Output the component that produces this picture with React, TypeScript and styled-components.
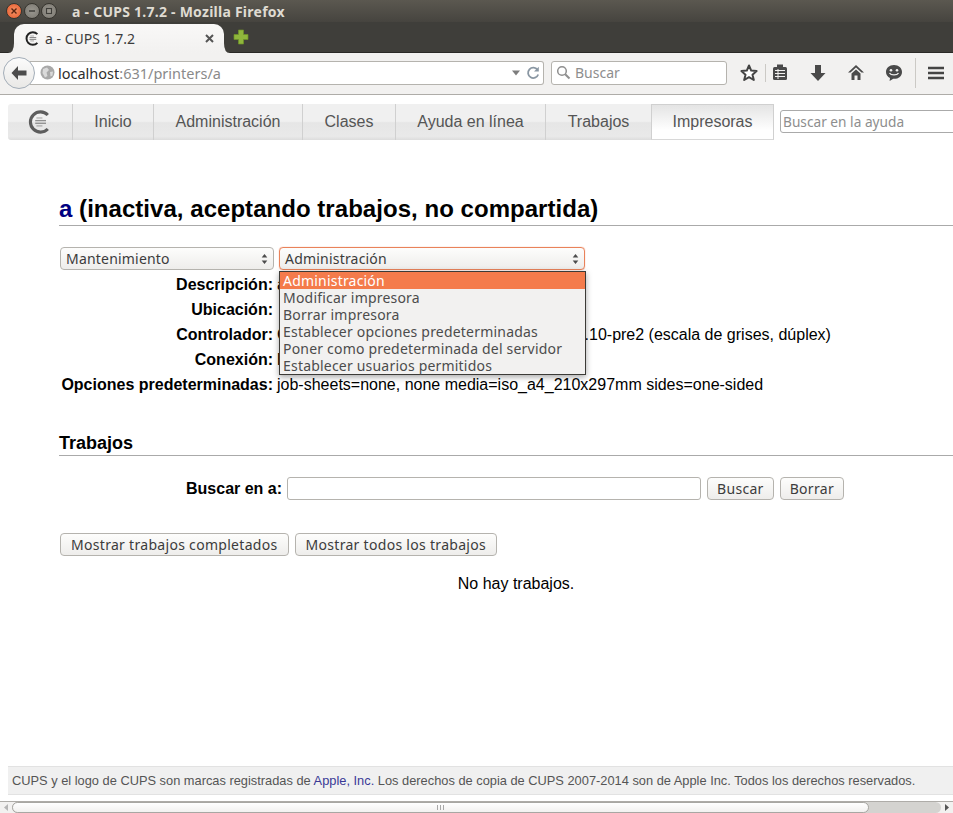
import React from 'react';
import styled, { createGlobalStyle } from 'styled-components';

const UI_FONT = `"Noto Sans", "Open Sans", sans-serif`;
const PAGE_FONT = `"Liberation Sans", Arial, sans-serif`;

const GlobalStyle = createGlobalStyle`
    html, body {
        margin: 0;
        padding: 0;
        height: 100%;
        overflow: hidden;
        background: #fff;
    }
    * {
        box-sizing: border-box;
    }
`;

const Logo: React.FC<{ size: number; color: string }> = ({ size, color }) => (
    <svg width={size} height={size} viewBox="0 0 20 20">
        <path d="M16.5 4.2A8.4 8.4 0 1 0 16.5 15.8" fill="none" stroke={color} strokeWidth="2.6" />
        <rect x="7" y="6.2" width="5" height="0.9" fill={color} opacity="0.5" />
        <rect x="6" y="8.3" width="9" height="1.1" fill={color} opacity="0.65" />
        <rect x="6" y="10.5" width="9" height="1.1" fill={color} opacity="0.65" />
        <rect x="7" y="12.8" width="5" height="0.9" fill={color} opacity="0.5" />
    </svg>
);

const App: React.FC = () => {
    return (
        <Window>
            <GlobalStyle />
            <TitleBar>
                <WindowButtons>
                    <WindowButton $close>
                        <svg width="8" height="8" viewBox="0 0 8 8">
                            <path d="M1.5 1.5L6.5 6.5M6.5 1.5L1.5 6.5" stroke="#5b2410" strokeWidth="1.4" />
                        </svg>
                    </WindowButton>
                    <WindowButton>
                        <svg width="8" height="8" viewBox="0 0 8 8">
                            <path d="M1 4H7" stroke="#3f3e3a" strokeWidth="1.5" />
                        </svg>
                    </WindowButton>
                    <WindowButton>
                        <svg width="8" height="8" viewBox="0 0 8 8">
                            <rect x="1.5" y="1.5" width="5" height="5" fill="none" stroke="#3f3e3a" strokeWidth="1.1" />
                        </svg>
                    </WindowButton>
                </WindowButtons>
                <WindowTitle>a - CUPS 1.7.2 - Mozilla Firefox</WindowTitle>
            </TitleBar>
            <TabStrip>
                <Tab>
                    <Logo size={15} color="#222" />
                    <TabLabel>a - CUPS 1.7.2</TabLabel>
                    <svg width="9" height="9" viewBox="0 0 9 9">
                        <path d="M1 1L8 8M8 1L1 8" stroke="#555" strokeWidth="2" />
                    </svg>
                </Tab>
                <NewTab>
                    <svg width="16" height="16" viewBox="0 0 16 16">
                        <path d="M5.5 1H10.5V5.5H15V10.5H10.5V15H5.5V10.5H1V5.5H5.5Z" fill="#8fb63c" stroke="#6f9426" strokeWidth="0.7" />
                    </svg>
                </NewTab>
            </TabStrip>
            <NavBar>
                <BackButton>
                    <svg width="18" height="16" viewBox="0 0 18 16">
                        <path d="M8 1L1.5 8L8 15V10.5H16.5V5.5H8Z" fill="#4c4c4c" />
                    </svg>
                </BackButton>
                <UrlBar>
                    <svg width="15" height="15" viewBox="0 0 15 15">
                        <circle cx="7.5" cy="7.5" r="7" fill="#a9a9a9" />
                        <path d="M3 4L7 2.5L9 5L6.5 7.5L7.5 11L5 12.5L2.5 8Z" fill="#dadada" />
                        <path d="M10 7L13 6.5L12.5 10.5L10.5 11.5Z" fill="#dadada" />
                    </svg>
                    <UrlText>
                        localhost<UrlRest>:631/printers/a</UrlRest>
                    </UrlText>
                    <svg width="10" height="6" viewBox="0 0 10 6">
                        <path d="M1 0.5H9L5 5.5Z" fill="#7d7d7d" />
                    </svg>
                    <svg width="14" height="14" viewBox="0 0 14 14">
                        <path d="M11.5 3.8A5.2 5.2 0 1 0 12.2 8.5" fill="none" stroke="#8a97a3" strokeWidth="1.8" />
                        <path d="M12.8 0.8V5.6H8Z" fill="#8a97a3" />
                    </svg>
                </UrlBar>
                <BrowserSearch>
                    <svg width="15" height="15" viewBox="0 0 15 15">
                        <circle cx="6" cy="6" r="4.3" fill="none" stroke="#8f8f8f" strokeWidth="1.5" />
                        <path d="M9.2 9.2L13.5 13.5" stroke="#8f8f8f" strokeWidth="2" />
                    </svg>
                    <span>Buscar</span>
                </BrowserSearch>
                <ToolIcon $left={10}>
                    <svg width="18" height="18" viewBox="0 0 18 18">
                        <path d="M9 1.5L11.2 6.6L16.6 7.1L12.5 10.7L13.8 16L9 13.2L4.2 16L5.5 10.7L1.4 7.1L6.8 6.6Z" fill="#fff" stroke="#444" strokeWidth="2" strokeLinejoin="round" />
                    </svg>
                </ToolIcon>
                <ToolDivider $left={4} />
                <ToolIcon $left={2}>
                    <svg width="16" height="17" viewBox="0 0 16 17">
                        <rect x="1" y="3" width="14" height="13" rx="1.5" fill="#4a4a4a" />
                        <rect x="5" y="0.5" width="6" height="3.5" fill="#4a4a4a" />
                        <path d="M3 6.5H13M3 9.5H13M3 12.5H13M6 5V15" stroke="#f2f1f0" strokeWidth="1" />
                    </svg>
                </ToolIcon>
                <ToolIcon $left={14}>
                    <svg width="16" height="18" viewBox="0 0 16 18">
                        <path d="M5 1H11V9H15.5L8 17L0.5 9H5Z" fill="#4a4a4a" />
                    </svg>
                </ToolIcon>
                <ToolIcon $left={14}>
                    <svg width="18" height="17" viewBox="0 0 18 17">
                        <path d="M9 1L1 8.5H3.5L9 3.6L14.5 8.5H17Z" fill="#4a4a4a" />
                        <path d="M4.5 9.5L9 5.5L13.5 9.5V16H10.5V11.5H7.5V16H4.5Z" fill="#4a4a4a" />
                    </svg>
                </ToolIcon>
                <ToolIcon $left={14}>
                    <svg width="18" height="18" viewBox="0 0 18 18">
                        <path d="M9 1C4.3 1 1 3.9 1 7.9C1 10.6 2.6 12.8 5 13.9L4.6 17L8.3 14.7C8.5 14.7 8.8 14.8 9 14.8C13.7 14.8 17 11.9 17 7.9C17 3.9 13.7 1 9 1Z" fill="#4a4a4a" />
                        <circle cx="6" cy="6.2" r="1.3" fill="#f2f1f0" />
                        <circle cx="12" cy="6.2" r="1.3" fill="#f2f1f0" />
                        <path d="M4.5 9C6 11.6 12 11.6 13.5 9" fill="none" stroke="#f2f1f0" strokeWidth="1.3" />
                    </svg>
                </ToolIcon>
                <ToolDivider $left={9} $tall />
                <ToolIcon $left={8}>
                    <svg width="16" height="14" viewBox="0 0 16 14">
                        <path d="M0 2H16M0 7H16M0 12H16" stroke="#444" strokeWidth="2.4" />
                    </svg>
                </ToolIcon>
            </NavBar>
            <Page>
                <PageInner>
                    <CupsNav>
                        <NavLogo>
                            <Logo size={24} color="#5d5d5d" />
                        </NavLogo>
                        <NavItem $width={81}>Inicio</NavItem>
                        <NavItem $width={149}>Administración</NavItem>
                        <NavItem $width={93}>Clases</NavItem>
                        <NavItem $width={150}>Ayuda en línea</NavItem>
                        <NavItem $width={106}>Trabajos</NavItem>
                        <NavItem $width={123} $active>
                            Impresoras
                        </NavItem>
                        <HelpSearch>Buscar en la ayuda</HelpSearch>
                    </CupsNav>
                    <Content>
                        <Title>
                            <TitleLink>a</TitleLink> (inactiva, aceptando trabajos, no compartida)
                        </Title>
                        <SelectRow>
                            <SelectBox $width={214}>
                                Mantenimiento
                                <SelectArrows />
                            </SelectBox>
                            <SelectWrap>
                                <SelectBox $width={306} $focused>
                                    Administración
                                    <SelectArrows />
                                </SelectBox>
                                <Menu>
                                    <MenuItem $selected>Administración</MenuItem>
                                    <MenuItem>Modificar impresora</MenuItem>
                                    <MenuItem>Borrar impresora</MenuItem>
                                    <MenuItem>Establecer opciones predeterminadas</MenuItem>
                                    <MenuItem>Poner como predeterminada del servidor</MenuItem>
                                    <MenuItem>Establecer usuarios permitidos</MenuItem>
                                </Menu>
                            </SelectWrap>
                        </SelectRow>
                        <InfoTable>
                            <InfoLabel>Descripción:</InfoLabel>
                            <InfoValue>a</InfoValue>
                            <InfoLabel>Ubicación:</InfoLabel>
                            <InfoValue />
                            <InfoLabel>Controlador:</InfoLabel>
                            <InfoValue>Generic PCL Laser: CUPS+Gutenprint v5.2.10-pre2 (escala de grises, dúplex)</InfoValue>
                            <InfoLabel>Conexión:</InfoLabel>
                            <InfoValue>hp:/usb/a</InfoValue>
                            <InfoLabel>Opciones predeterminadas:</InfoLabel>
                            <InfoValue>job-sheets=none, none media=iso_a4_210x297mm sides=one-sided</InfoValue>
                        </InfoTable>
                        <SectionTitle>Trabajos</SectionTitle>
                        <SearchForm>
                            <SearchLabel>Buscar en a:</SearchLabel>
                            <SearchInput />
                            <FormButton $pad={9}>Buscar</FormButton>
                            <FormButton $pad={9}>Borrar</FormButton>
                        </SearchForm>
                        <ButtonRow>
                            <FormButton>Mostrar trabajos completados</FormButton>
                            <FormButton>Mostrar todos los trabajos</FormButton>
                        </ButtonRow>
                        <EmptyNote>No hay trabajos.</EmptyNote>
                    </Content>
                    <Footer>
                        CUPS y el logo de CUPS son marcas registradas de <FooterLink>Apple, Inc.</FooterLink> Los derechos de copia de CUPS 2007-2014 son de Apple Inc. Todos los derechos reservados.
                    </Footer>
                </PageInner>
            </Page>
            <ScrollBar>
                <ScrollArrow>
                    <svg width="4" height="7" viewBox="0 0 4 7">
                        <path d="M4 0V7L0 3.5Z" fill="#b5b5b5" />
                    </svg>
                </ScrollArrow>
                <ScrollTrack>
                    <ScrollThumb>
                        <svg width="7" height="5" viewBox="0 0 7 5">
                            <path d="M0.5 0V5M3.5 0V5M6.5 0V5" stroke="#a8a8a8" strokeWidth="1" />
                        </svg>
                    </ScrollThumb>
                </ScrollTrack>
                <ScrollArrow>
                    <svg width="4" height="7" viewBox="0 0 4 7">
                        <path d="M0 0V7L4 3.5Z" fill="#555" />
                    </svg>
                </ScrollArrow>
            </ScrollBar>
        </Window>
    );
};

export default App;

const Window = styled.div`
    width: 953px;
    height: 813px;
    display: flex;
    flex-direction: column;
    overflow: hidden;
    background: #fff;
`;

const TitleBar = styled.div`
    height: 22px;
    flex: none;
    display: flex;
    align-items: center;
    padding-left: 6px;
    background: linear-gradient(#5b5850, #46443f);
`;

const WindowButtons = styled.div`
    display: flex;
    gap: 1.5px;
    width: 66px;
`;

const WindowButton = styled.div<{ $close?: boolean }>`
    width: 16px;
    height: 16px;
    border-radius: 50%;
    display: flex;
    align-items: center;
    justify-content: center;
    background: ${(p) => (p.$close ? 'radial-gradient(#f59468, #e8592a)' : 'radial-gradient(#9a978f, #7a7770)')};
    border: 1px solid #37352f;
`;

const WindowTitle = styled.div`
    font-family: ${UI_FONT};
    font-size: 14px;
    font-weight: 700;
    letter-spacing: 0.25px;
    color: #dfdbd2;
`;

const TabStrip = styled.div`
    height: 31px;
    flex: none;
    display: flex;
    align-items: flex-end;
    padding-left: 14px;
    background: #3f3e3a;
    border-bottom: 1px solid #2a2926;
`;

const Tab = styled.div`
    width: 210px;
    height: 29px;
    margin-bottom: -1px;
    display: flex;
    align-items: center;
    padding: 0 10px 0 11px;
    background: linear-gradient(#f9f8f7, #f2f1f0);
    border-radius: 10px 10px 0 0;
    position: relative;

    &::before,
    &::after {
        content: '';
        position: absolute;
        bottom: 0;
        width: 10px;
        height: 10px;
        background: #f2f1f0;
    }
    &::before {
        left: -6px;
        clip-path: path('M0 10 Q6 10 6 0 L10 0 L10 10 Z');
    }
    &::after {
        right: -6px;
        clip-path: path('M10 10 Q4 10 4 0 L0 0 L0 10 Z');
    }
`;

const TabLabel = styled.span`
    flex: 1;
    margin-left: 5px;
    font-family: ${UI_FONT};
    font-size: 14px;
    color: #3c3c3c;
`;

const NewTab = styled.div`
    margin: 0 0 7px 9px;
    display: flex;
`;

const NavBar = styled.div`
    height: 42px;
    flex: none;
    display: flex;
    align-items: center;
    padding: 0 0 2px 3px;
    background: #f2f1f0;
    border-bottom: 1px solid #aeaca8;
`;

const BackButton = styled.div`
    width: 32px;
    height: 32px;
    flex: none;
    border-radius: 50%;
    display: flex;
    align-items: center;
    justify-content: center;
    position: relative;
    z-index: 1;
    margin-right: -5px;
    background: linear-gradient(#fbfbfb, #e9e8e6);
    border: 1px solid #a3adb8;
`;

const UrlBar = styled.div`
    width: 514px;
    height: 24px;
    flex: none;
    display: flex;
    align-items: center;
    padding: 0 3px 0 10px;
    gap: 5px;
    background: #fff;
    border: 1px solid #b5b3ae;
    border-left: none;
    border-radius: 0 3px 3px 0;
`;

const UrlText = styled.div`
    flex: 1;
    margin-left: -2px;
    font-family: ${UI_FONT};
    font-size: 14.5px;
    color: #2e2e2e;
    white-space: nowrap;
`;

const UrlRest = styled.span`
    color: #8a8a8a;
`;

const BrowserSearch = styled.div`
    width: 176px;
    height: 24px;
    flex: none;
    margin-left: 7px;
    display: flex;
    align-items: center;
    gap: 4px;
    padding-left: 4px;
    background: #fff;
    border: 1px solid #b5b3ae;
    border-radius: 3px;
    font-family: ${UI_FONT};
    font-size: 14px;
    color: #8e8e8e;
`;

const ToolIcon = styled.div<{ $left: number }>`
    width: 24px;
    height: 24px;
    flex: none;
    margin-left: ${(p) => p.$left}px;
    display: flex;
    align-items: center;
    justify-content: center;
`;

const ToolDivider = styled.div<{ $left: number; $tall?: boolean }>`
    width: 1px;
    height: ${(p) => (p.$tall ? 30 : 18)}px;
    flex: none;
    margin-left: ${(p) => p.$left}px;
    background: #cbc9c5;
`;

const Page = styled.div`
    flex: 1;
    min-height: 0;
    overflow: hidden;
    background: #fff;
`;

const PageInner = styled.div`
    width: 1030px;
    height: 100%;
    display: flex;
    flex-direction: column;
    font-family: ${PAGE_FONT};
    color: #000;
`;

const CupsNav = styled.div`
    display: flex;
    height: 36px;
    margin: 9px 0 0 8px;
    flex: none;
    align-items: stretch;
`;

const navBg = 'linear-gradient(#f0f0f0 0, #f0f0f0 48%, #e6e6e6 52%, #e9e9e9 90%, #dcdcdc 100%)';

const NavLogo = styled.div`
    width: 64px;
    display: flex;
    align-items: center;
    justify-content: center;
    background: ${navBg};
    border-radius: 3px 0 0 3px;
`;

const NavItem = styled.div<{ $width: number; $active?: boolean }>`
    width: ${(p) => p.$width}px;
    display: flex;
    align-items: center;
    justify-content: center;
    font-size: 16px;
    color: #555;
    border-left: 1px solid #d0d0d0;
    background: ${(p) => (p.$active ? 'linear-gradient(#e4e4e4, #fff 75%)' : navBg)};
    ${(p) => p.$active && 'border-right: 1px solid #d0d0d0; border-top: 1px solid #d0d0d0; border-bottom: 1px solid #d8d8d8;'}
`;

const HelpSearch = styled.div`
    width: 190px;
    height: 23px;
    margin: 6px 0 0 6px;
    padding-left: 2px;
    border: 1px solid #aaa;
    border-radius: 3px;
    font-family: ${UI_FONT};
    font-size: 13.7px;
    line-height: 21px;
    color: #8e8e8e;
    white-space: nowrap;
`;

const Content = styled.div`
    flex: 1;
    padding: 55px 57px 0 59px;
`;

const Title = styled.h2`
    margin: 0;
    height: 31px;
    font-size: 24px;
    line-height: 28px;
    font-weight: 700;
    letter-spacing: 0.04px;
    color: #000;
    border-bottom: 1px solid #aaa;
`;

const TitleLink = styled.span`
    color: #000080;
`;

const SelectRow = styled.div`
    display: flex;
    gap: 5px;
    margin: 21px 0 0 1px;
`;

const SelectWrap = styled.div`
    position: relative;
`;

const SelectBox = styled.div<{ $width: number; $focused?: boolean }>`
    width: ${(p) => p.$width}px;
    height: 23px;
    display: flex;
    align-items: center;
    justify-content: space-between;
    padding: 0 5px;
    font-family: ${UI_FONT};
    font-size: 14px;
    letter-spacing: 0.2px;
    color: #3c3c3c;
    border: 1px solid ${(p) => (p.$focused ? '#e9825a' : '#b5b3ae')};
    border-radius: 4px;
    background: linear-gradient(#fdfdfc, #eeedeb);
    ${(p) => p.$focused && 'box-shadow: 0 0 1px #e9825a;'}
`;

const SelectArrows: React.FC = () => (
    <svg width="7" height="12" viewBox="0 0 7 12">
        <path d="M3.5 1L6.3 4.5H0.7Z M3.5 11L0.7 7.5H6.3Z" fill="#4c4c4c" />
    </svg>
);

const Menu = styled.div`
    position: absolute;
    top: 24px;
    left: 0;
    width: 307px;
    background: #f2f1f0;
    border: 1px solid #3c3b37;
    box-shadow: 0 2px 6px rgba(0, 0, 0, 0.35);
    z-index: 2;
`;

const MenuItem = styled.div<{ $selected?: boolean }>`
    height: 17px;
    padding-left: 3px;
    font-family: ${UI_FONT};
    font-size: 14px;
    letter-spacing: 0.2px;
    line-height: 17px;
    white-space: nowrap;
    color: ${(p) => (p.$selected ? '#fff' : '#4c4c4c')};
    background: ${(p) => (p.$selected ? '#f47b4b' : 'transparent')};
`;

const InfoTable = styled.div`
    display: grid;
    grid-template-columns: 214px 1fr;
    grid-auto-rows: 25px;
    column-gap: 4px;
    align-items: center;
    margin-top: 2px;
    font-size: 16px;
`;

const InfoLabel = styled.div`
    text-align: right;
    font-weight: 700;
    white-space: nowrap;
`;

const InfoValue = styled.div`
    white-space: nowrap;
    min-height: 18px;
`;

const SectionTitle = styled.h3`
    margin: 35px 0 0;
    height: 24px;
    font-size: 18px;
    line-height: 22px;
    font-weight: 700;
    border-bottom: 1px solid #aaa;
`;

const SearchForm = styled.div`
    display: flex;
    align-items: center;
    margin: 21px 0 0 127px;
`;

const SearchLabel = styled.div`
    font-size: 16px;
    font-weight: 700;
    margin-right: 5px;
`;

const SearchInput = styled.div`
    width: 414px;
    height: 23px;
    margin-right: 6px;
    background: #fff;
    border: 1px solid #b5b3ae;
    border-radius: 3px;
`;

const FormButton = styled.div<{ $pad?: number }>`
    height: 23px;
    padding: 0 ${(p) => p.$pad ?? 10}px;
    margin-right: 6px;
    flex: none;
    display: flex;
    align-items: center;
    font-family: ${UI_FONT};
    font-size: 14px;
    letter-spacing: 0.3px;
    white-space: nowrap;
    color: #3c3c3c;
    border: 1px solid #b5b3ae;
    border-radius: 4px;
    background: linear-gradient(#fdfdfc, #eeedeb);
`;

const ButtonRow = styled.div`
    display: flex;
    margin: 33px 0 0 1px;
`;

const EmptyNote = styled.p`
    margin: 19px 0 0;
    font-size: 16px;
    text-align: center;
`;

const Footer = styled.div`
    height: 29px;
    flex: none;
    margin: 0 0 6px 8px;
    padding-left: 4px;
    font-size: 12.83px;
    line-height: 28px;
    color: #555;
    background: #f0f0f0;
    white-space: nowrap;
    border-top: 1px solid #e2e2e2;
    border-bottom: 1px solid #e2e2e2;
`;

const FooterLink = styled.span`
    color: #3a3a96;
`;

const ScrollBar = styled.div`
    height: 12px;
    flex: none;
    display: flex;
    align-items: center;
    background: #f2f1f0;
    border-top: 1px solid #aeaca8;
`;

const ScrollArrow = styled.div`
    width: 12px;
    flex: none;
    display: flex;
    justify-content: center;
`;

const ScrollTrack = styled.div`
    flex: 1;
    height: 11px;
    background: #d4d3d0;
    border-radius: 6px;
`;

const ScrollThumb = styled.div`
    width: 857px;
    height: 11px;
    display: flex;
    align-items: center;
    justify-content: center;
    background: linear-gradient(#fff, #f2f1f0);
    border: 1px solid #a8a7a3;
    border-radius: 6px;
`;
